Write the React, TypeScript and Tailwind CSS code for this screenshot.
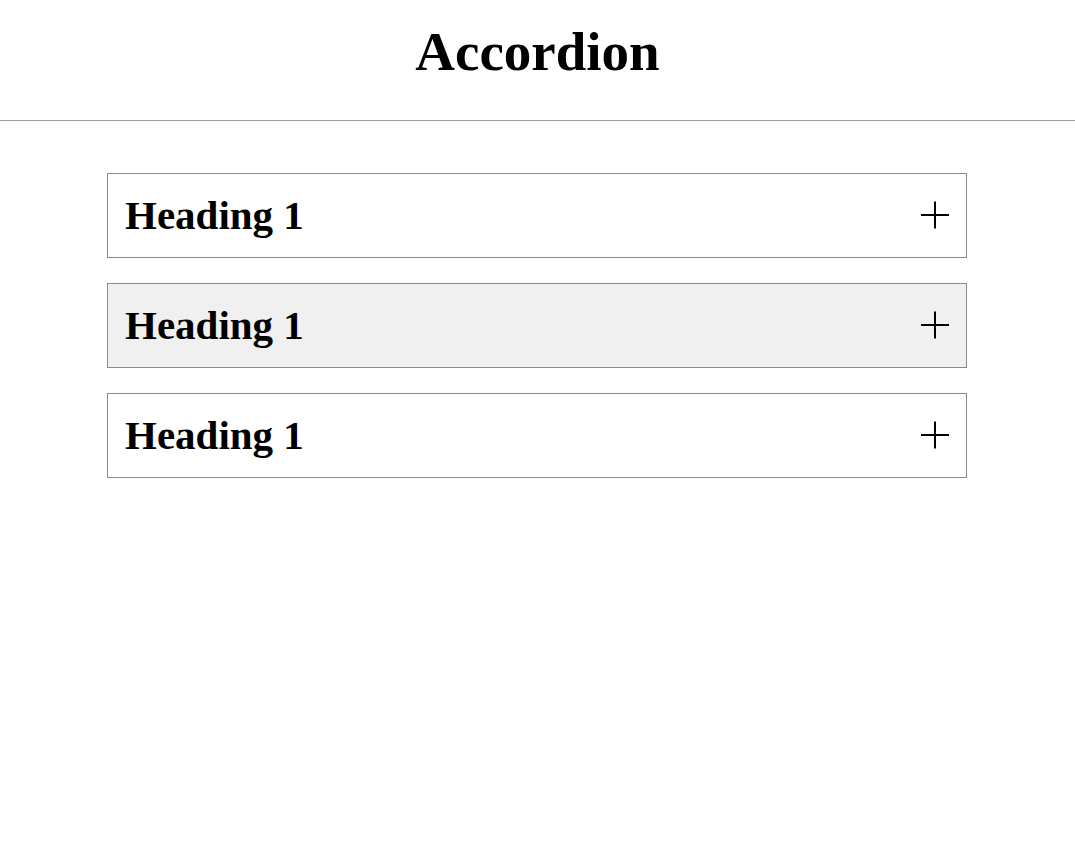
import React from "react";

function Plus() {
  return (
    <svg width="28" height="28" viewBox="0 0 28 28" className="shrink-0">
      <line x1="0" y1="14" x2="28" y2="14" stroke="#000" strokeWidth="2" />
      <line x1="14" y1="0.5" x2="14" y2="27.5" stroke="#000" strokeWidth="2" />
    </svg>
  );
}

function Item({ active }: { active?: boolean }) {
  return (
    <div
      className={`h-[84.5px] border border-[#8a8a8a] flex items-center justify-between pl-[17px] pr-[17px] ${
        active ? "bg-[#f0f0f0]" : "bg-white"
      }`}
    >
      <span className="text-[41px] font-bold leading-none text-black">Heading 1</span>
      <Plus />
    </div>
  );
}

export default function App() {
  return (
    <div
      className="min-h-[846px] bg-white text-black"
      style={{ fontFamily: '"Liberation Serif", "Times New Roman", serif' }}
    >
      <header className="h-[120px] flex items-center justify-center border-b border-[#a0a0a0] box-content">
        <h1 className="text-[55px] font-bold leading-none pb-[18px]">Accordion</h1>
      </header>
      <div className="w-[860px] ml-[107px] mt-[52px] flex flex-col gap-[25.5px]">
        <Item />
        <Item active />
        <Item />
      </div>
    </div>
  );
}
